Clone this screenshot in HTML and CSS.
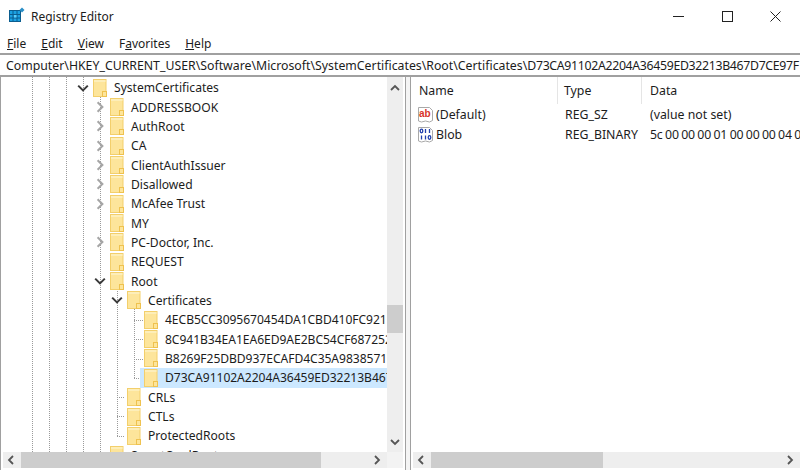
FILE: index.html
```html
<!DOCTYPE html>
<html lang="en">
<head>
<meta charset="utf-8">
<title>Registry Editor</title>
<link rel="stylesheet" href="styles.css">
</head>
<body>
<svg class="defs" width="0" height="0" aria-hidden="true">
  <defs>
    <symbol id="folder" viewBox="0 0 14 18">
      <rect x="0.5" y="0.5" width="12.5" height="17" fill="#fde59b" stroke="#f3cf6b"/>
      <rect x="1" y="1" width="11.5" height="2" fill="#fdeeb9"/>
      <rect x="9.5" y="12.5" width="4" height="5" fill="#fde59b" stroke="#efc24f"/>
    </symbol>
    <symbol id="open" viewBox="0 0 10 10"><path d="M1 3l4 4 4-4" fill="none" stroke="#3a3a3a" stroke-width="1.7"/></symbol>
    <symbol id="closed" viewBox="0 0 10 10"><path d="M3 1l4 4-4 4" fill="none" stroke="#a6a6a6" stroke-width="1.7"/></symbol>
  </defs>
</svg>
<div class="app">
  <header class="titlebar">
    <svg class="appicon" width="16" height="17" viewBox="0 0 16 17">
      <rect x="0.5" y="3.5" width="11" height="11" fill="#1ba1e2" stroke="#0b5d8f"/>
      <path d="M4 4v10M8 4v10M1 7.5h10M1 11h10" stroke="#0b5d8f" stroke-width="1"/>
      <rect x="5" y="8" width="2.500" height="2.500" fill="#5fd0fa"/>
      <path d="M13 0.500l2.500 2.500-2.500 2.500-2.500-2.500z" fill="#2a8fc7"/>
    </svg>
    <span class="title">Registry Editor</span>
    <div class="controls">
      <div class="ctl"><svg width="11" height="11" viewBox="0 0 11 11"><path d="M0 5.500h11" stroke="#222" stroke-width="1"/></svg></div>
      <div class="ctl"><svg width="11" height="11" viewBox="0 0 11 11"><rect x="0.500" y="0.500" width="10" height="10" fill="none" stroke="#222"/></svg></div>
      <div class="ctl"><svg width="11" height="11" viewBox="0 0 11 11"><path d="M0.500 0.500l10 10M10.500 0.500l-10 10" stroke="#222" stroke-width="1"/></svg></div>
    </div>
  </header>
  <nav class="menubar">
    <span class="menu"><u>F</u>ile</span>
    <span class="menu"><u>E</u>dit</span>
    <span class="menu"><u>V</u>iew</span>
    <span class="menu">F<u>a</u>vorites</span>
    <span class="menu"><u>H</u>elp</span>
  </nav>
  <div class="address">Computer\HKEY_CURRENT_USER\Software\Microsoft\SystemCertificates\Root\Certificates\<span class="hex">D73CA91102A2204A36459ED32213B467D7CE97F</span></div>
  <main class="panes">
    <section class="left">
      <div class="left-top">
        <div class="tree">
          <svg class="guides" width="386" height="375" viewBox="0 0 386 375">
            <g stroke="#9a9a9a" stroke-dasharray="1 1" fill="none">
              <path d="M32.500 0v375M49.500 0v375M66.500 0v375M83.500 0v375M100.500 18v357"/>
              <path d="M117.500 212v147M134.500 232v69"/>
              <path d="M134 243.500h9M134 262.500h9M134 282.500h9M134 301.500h9"/>
              <path d="M117 320.500h8M117 339.500h8M117 359.500h8"/>
            </g>
          </svg>
          <div class="row l3"><svg class="chev"><use href="#open"/></svg><div class="item"><svg class="fold"><use href="#folder"/></svg><span class="name">SystemCertificates</span></div></div>
          <div class="row l4"><svg class="chev"><use href="#closed"/></svg><div class="item"><svg class="fold"><use href="#folder"/></svg><span class="name">ADDRESSBOOK</span></div></div>
          <div class="row l4"><svg class="chev"><use href="#closed"/></svg><div class="item"><svg class="fold"><use href="#folder"/></svg><span class="name">AuthRoot</span></div></div>
          <div class="row l4"><svg class="chev"><use href="#closed"/></svg><div class="item"><svg class="fold"><use href="#folder"/></svg><span class="name">CA</span></div></div>
          <div class="row l4"><svg class="chev"><use href="#closed"/></svg><div class="item"><svg class="fold"><use href="#folder"/></svg><span class="name">ClientAuthIssuer</span></div></div>
          <div class="row l4"><svg class="chev"><use href="#closed"/></svg><div class="item"><svg class="fold"><use href="#folder"/></svg><span class="name">Disallowed</span></div></div>
          <div class="row l4"><svg class="chev"><use href="#closed"/></svg><div class="item"><svg class="fold"><use href="#folder"/></svg><span class="name">McAfee Trust</span></div></div>
          <div class="row l4"><svg class="chev"></svg><div class="item"><svg class="fold"><use href="#folder"/></svg><span class="name">MY</span></div></div>
          <div class="row l4"><svg class="chev"><use href="#closed"/></svg><div class="item"><svg class="fold"><use href="#folder"/></svg><span class="name">PC-Doctor, Inc.</span></div></div>
          <div class="row l4"><svg class="chev"></svg><div class="item"><svg class="fold"><use href="#folder"/></svg><span class="name">REQUEST</span></div></div>
          <div class="row l4"><svg class="chev"><use href="#open"/></svg><div class="item"><svg class="fold"><use href="#folder"/></svg><span class="name">Root</span></div></div>
          <div class="row l5"><svg class="chev"><use href="#open"/></svg><div class="item"><svg class="fold"><use href="#folder"/></svg><span class="name">Certificates</span></div></div>
          <div class="row l6"><svg class="chev"></svg><div class="item"><svg class="fold"><use href="#folder"/></svg><span class="name hex">4ECB5CC3095670454DA1CBD410FC921EC8E5CC21</span></div></div>
          <div class="row l6"><svg class="chev"></svg><div class="item"><svg class="fold"><use href="#folder"/></svg><span class="name hex">8C941B34EA1EA6ED9AE2BC54CF687252B4C9B561</span></div></div>
          <div class="row l6"><svg class="chev"></svg><div class="item"><svg class="fold"><use href="#folder"/></svg><span class="name hex">B8269F25DBD937ECAFD4C35A9838571723F2D026</span></div></div>
          <div class="row l6"><svg class="chev"></svg><div class="item selected"><svg class="fold"><use href="#folder"/></svg><span class="name hex">D73CA91102A2204A36459ED32213B467D7CE97FB</span></div></div>
          <div class="row l5"><svg class="chev"></svg><div class="item"><svg class="fold"><use href="#folder"/></svg><span class="name">CRLs</span></div></div>
          <div class="row l5"><svg class="chev"></svg><div class="item"><svg class="fold"><use href="#folder"/></svg><span class="name">CTLs</span></div></div>
          <div class="row l5"><svg class="chev"></svg><div class="item"><svg class="fold"><use href="#folder"/></svg><span class="name">ProtectedRoots</span></div></div>
          <div class="row l4"><svg class="chev"></svg><div class="item"><svg class="fold"><use href="#folder"/></svg><span class="name">SmartCardRoot</span></div></div>
        </div>
        <div class="vscroll">
          <svg class="arrow arrow-up" viewBox="0 0 10 10"><path d="M1 7l4-4 4 4" fill="none" stroke="#555" stroke-width="1.800"/></svg>
          <div class="vtrack"><div class="vthumb"></div></div>
          <svg class="arrow arrow-down" viewBox="0 0 10 10"><path d="M1 3l4 4 4-4" fill="none" stroke="#555" stroke-width="1.800"/></svg>
        </div>
      </div>
      <div class="left-bottom">
        <div class="hscroll">
          <svg class="arrow" viewBox="0 0 10 10"><path d="M7 1L3 5l4 4" fill="none" stroke="#555" stroke-width="1.800"/></svg>
          <div class="hthumb left-thumb"></div>
          <div class="spring"></div>
          <svg class="arrow" viewBox="0 0 10 10"><path d="M3 1l4 4-4 4" fill="none" stroke="#555" stroke-width="1.800"/></svg>
        </div>
        <div class="corner"></div>
      </div>
    </section>
    <div class="splitter"></div>
    <section class="right">
      <div class="list">
        <div class="head">
          <div class="col c1"><span>Name</span></div>
          <div class="col c2"><span>Type</span></div>
          <div class="col c3"><span>Data</span></div>
        </div>
        <div class="vrow">
          <div class="cell c1">
            <svg class="vicon" width="17" height="17" viewBox="0 0 17 17">
              <path d="M1.500 1.500h11l3 3v10l-3 1.500-4-1-4 1-3-1z" fill="#fff" stroke="#a9a9a9"/>
              <text x="2" y="10.500" class="abtext">ab</text>
            </svg>
            <span>(Default)</span>
          </div>
          <div class="cell c2">REG_SZ</div>
          <div class="cell c3">(value not set)</div>
        </div>
        <div class="vrow">
          <div class="cell c1">
            <svg class="vicon" width="17" height="17" viewBox="0 0 17 17">
              <path d="M1.500 1.500h11l3 3v10l-3 1.500-4-1-4 1-3-1z" fill="#fff" stroke="#a9a9a9"/>
              <g fill="none" stroke="#1f3fae" stroke-width="1.300">
                <ellipse cx="4.500" cy="5" rx="1.300" ry="1.800"/>
                <path d="M8.500 3v4M12.500 3v4M4.500 9.500v4M8.500 9.500v4"/>
                <ellipse cx="12.500" cy="11.500" rx="1.300" ry="1.800"/>
              </g>
            </svg>
            <span>Blob</span>
          </div>
          <div class="cell c2">REG_BINARY</div>
          <div class="cell c3 bytes">5c 00 00 00 01 00 00 00 04 00 00 00</div>
        </div>
      </div>
      <div class="right-bottom">
        <div class="hscroll">
          <svg class="arrow" viewBox="0 0 10 10"><path d="M7 1L3 5l4 4" fill="none" stroke="#555" stroke-width="1.800"/></svg>
          <div class="hthumb right-thumb"></div>
          <div class="spring"></div>
          <svg class="arrow" viewBox="0 0 10 10"><path d="M3 1l4 4-4 4" fill="none" stroke="#555" stroke-width="1.800"/></svg>
        </div>
      </div>
    </section>
  </main>
</div>
</body>
</html>
```
FILE: styles.css
```css
* { box-sizing: border-box; }
html, body { margin: 0; padding: 0; width: 800px; height: 470px; overflow: hidden; background: #fff; }
body { font-family: "Noto Sans", "Open Sans", sans-serif; font-size: 12.3px; color: #1c1c1c; }
.defs { display: block; height: 0; }
.app { width: 800px; height: 470px; display: flex; flex-direction: column; }
.address .hex { letter-spacing: -0.32px; }
.tree .hex { letter-spacing: -0.05px; }
.bytes { letter-spacing: -0.17px; word-spacing: -0.6px; }

.titlebar { height: 32px; display: flex; align-items: center; padding-left: 9px; flex: none; }
.appicon { flex: none; margin-top: -1px; }
.title { margin-left: 6px; font-size: 12px; }
.controls { margin-left: auto; display: flex; }
.ctl { width: 48.500px; height: 30px; display: flex; align-items: center; justify-content: center; }

.menubar { height: 21px; display: flex; align-items: center; padding: 2px 0 0 7px; flex: none; font-size: 12px; }
.menu { margin-right: 15px; }

.address { height: 24px; flex: none; border-top: 2px solid #a0a0a0; border-bottom: 2px solid #a0a0a0; padding-left: 6px; line-height: 21px; white-space: nowrap; overflow: hidden; font-size: 12.3px; }

.panes { flex: 1; min-height: 0; display: flex; }
.left { width: 405px; flex: none; display: flex; flex-direction: column; padding: 0 2px 2px 2px; border-left: 1px solid #a0a0a0; }
.left-top { flex: 1; min-height: 0; display: flex; }
.tree { position: relative; flex: 1; min-width: 0; overflow: hidden; padding-top: 1px; font-size: 12.1px; }
.guides { position: absolute; left: -3px; top: 0; }

.row { position: relative; height: 19.350px; display: flex; align-items: center; }
.l3 { padding-left: 74px; }
.l4 { padding-left: 91px; }
.l5 { padding-left: 108px; }
.l6 { padding-left: 125px; }
.chev { width: 12px; height: 12px; flex: none; }
.item { flex: 1; min-width: 0; height: 100%; display: flex; align-items: center; padding-left: 4px; overflow: hidden; }
.fold { width: 14px; height: 18px; flex: none; }
.name { margin-left: 7px; white-space: nowrap; }
.selected { background: #cce8ff; }

.vscroll { width: 16px; flex: none; background: #eeeeee; display: flex; flex-direction: column; align-items: stretch; }
.arrow { width: 10px; height: 10px; flex: none; }
.vscroll .arrow { margin: 0 3px; }
.vscroll .arrow-up { margin-top: 6px; }
.vscroll .arrow-down { margin-bottom: 5px; }
.vtrack { flex: 1; padding-top: 212px; }
.vthumb { height: 28px; background: #cdcdcd; }

.left-bottom { height: 16px; flex: none; display: flex; }
.hscroll { flex: 1; display: flex; align-items: center; background: #eeeeee; height: 16px; }
.hscroll .arrow { margin: 3px 5px 3px 3px; }
.hscroll .arrow:last-child { margin: 3px 5px 3px 4px; }
.hthumb { height: 16px; background: #cdcdcd; }
.left-thumb { width: 300px; }
.spring { flex: 1; }
.corner { width: 16px; background: #f3f3f3; }

.splitter { width: 6px; flex: none; border-left: 1px solid #a0a0a0; border-right: 1px solid #a0a0a0; background: #f4f4f4; }

.right { flex: 1; min-width: 0; display: flex; flex-direction: column; padding-bottom: 2px; }
.list { flex: 1; min-height: 0; overflow: hidden; }
.head { height: 27px; display: flex; align-items: center; }
.col { height: 27px; display: flex; align-items: center; border-right: 1px solid #e5e5e5; }
.col.c3 { border-right: 0; }
.c1 { width: 147px; padding-left: 8px; flex: none; }
.c2 { width: 84px; padding-left: 6px; flex: none; }
.c3 { flex: 1; min-width: 0; padding-left: 8px; white-space: nowrap; overflow: hidden; }
.vrow { height: 20px; display: flex; align-items: center; }
.cell { height: 20px; display: flex; align-items: center; }
.cell.c1 { padding-left: 6px; }
.cell.c2 { padding-left: 7px; }
.vicon { flex: none; margin-right: 2px; }
.abtext { font-family: "Liberation Sans", sans-serif; font-size: 10px; font-weight: 700; fill: #d8342a; }

.right-bottom { height: 16px; flex: none; display: flex; padding-left: 2px; }
.right-thumb { width: 172px; }
```
